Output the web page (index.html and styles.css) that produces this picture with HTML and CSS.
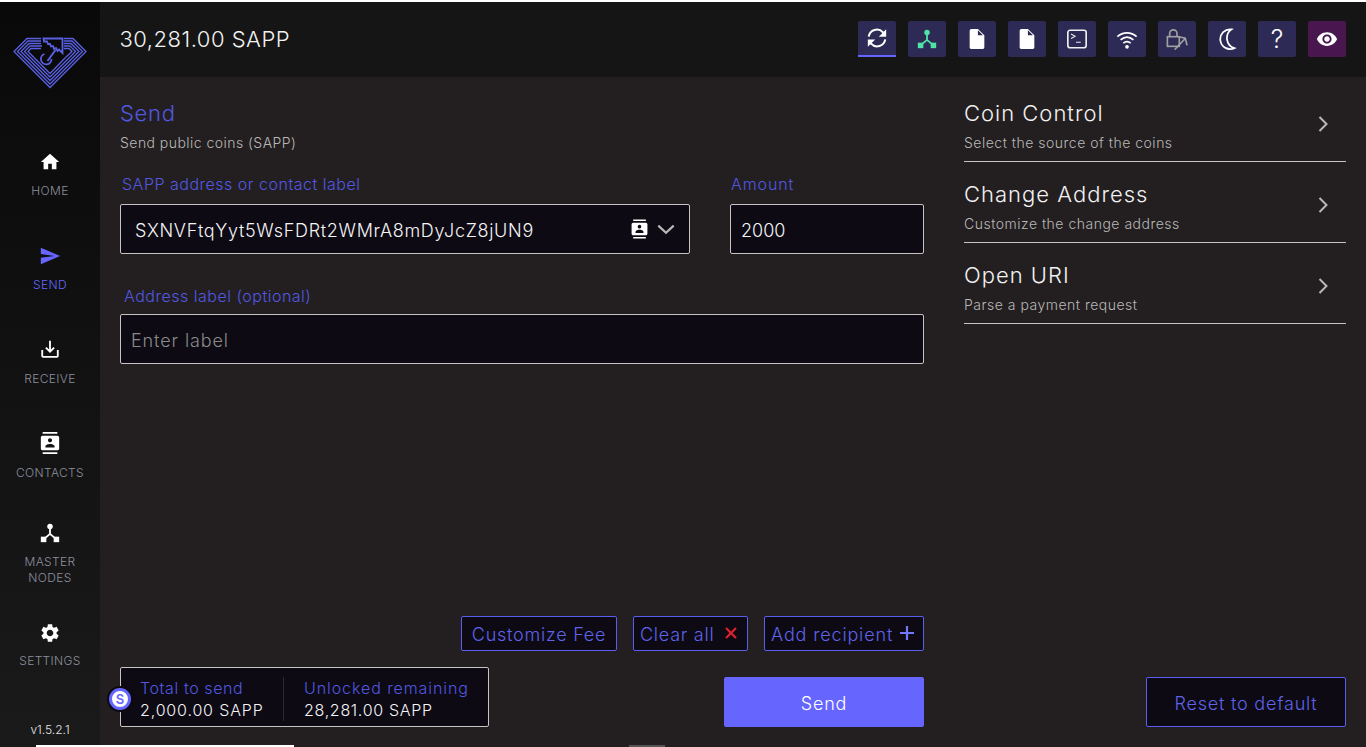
FILE: index.html
```html
<!DOCTYPE html>
<html lang="en">
<head>
<meta charset="utf-8">
<title>Send</title>
<link rel="stylesheet" href="styles.css">
</head>
<body>
<div class="app">
  <aside class="sidebar">
    <svg class="logo" viewBox="0 0 74 52" width="74" height="52" fill="none" stroke="#5a60e4" stroke-width="1.300">
      <path d="M28 1.500H14L1 14.500l36 36 36-36-13-13H51"/>
      <path d="M28 4H15L4.500 14.500 37 47 69.500 14.500 59 4H51"/>
      <path d="M28 6.500H16L8 14.500 37 43.500 66 14.500 58 6.500H51"/>
      <path d="M29 9H17L11.500 14.500 37 40 62.500 14.500 57 9H51"/>
      <path d="M28 11.500H18L15 14.500 21 20.500M52.500 20.500 59 14.500 56 11.500H51"/>
      <path d="M21 20.500 37 36.500 52.500 20.500"/>
      <path d="M30.500 1.500H49.500V16L46 12.500 44.500 14 43 11 41 12 40 9 38 9.500 37 7 35 7 34 4.500 31 4.500z" stroke-width="1.800"/>
      <path d="M42.500 13 34.500 24" stroke-width="2"/>
      <path d="M31.500 17a5.300 5.300 0 1 0 7 5" stroke-width="1.800"/>
    </svg>
    <nav class="nav">
      <a class="nav-item">
        <svg class="nav-icon" viewBox="0 -1 24 24"><path d="M10 20v-6h4v6h5v-8h3L12 3 2 12h3v8z"/></svg>
        <span class="nav-label">HOME</span>
      </a>
      <a class="nav-item nav-item-active">
        <svg class="nav-icon" viewBox="0 -1 24 24"><path d="M2.010 21 23 12 2.010 3 2 10l15 2-15 2z"/></svg>
        <span class="nav-label">SEND</span>
      </a>
      <a class="nav-item">
        <svg class="nav-icon" viewBox="0 0 24 24"><path d="M12 3v12M7.500 10.500 12 15l4.500-4.500M3.500 13v6.500c0 .6.400 1 1 1h15c.6 0 1-.4 1-1V13" fill="none" stroke="#fff" stroke-width="2"/></svg>
        <span class="nav-label">RECEIVE</span>
      </a>
      <a class="nav-item">
        <svg class="nav-icon" viewBox="0 0 24 24"><path d="M20 0H4v2h16V0zM4 24h16v-2H4v2zM20 4H4c-1.100 0-2 .9-2 2v12c0 1.100.9 2 2 2h16c1.100 0 2-.9 2-2V6c0-1.100-.9-2-2-2zm-8 2.750c1.240 0 2.250 1.010 2.250 2.250s-1.010 2.250-2.250 2.250S9.750 10.240 9.750 9 10.760 6.750 12 6.750zM17 17H7v-1.500c0-1.670 3.330-2.500 5-2.500s5 .83 5 2.500V17z"/></svg>
        <span class="nav-label">CONTACTS</span>
      </a>
      <a class="nav-item nav-item-master">
        <svg class="nav-icon" viewBox="0 0 24 24"><circle cx="12" cy="5" r="3"/><rect x="2" y="16" width="6" height="6"/><rect x="16" y="16" width="6" height="6"/><path d="M12 6v7L5 19M12 13l7 6" fill="none" stroke="#fff" stroke-width="2"/></svg>
        <span class="nav-label">MASTER<br>NODES</span>
      </a>
      <a class="nav-item nav-item-settings">
        <svg class="nav-icon" viewBox="0 0 24 24"><path d="M19.140 12.940c.04-.3.06-.61.06-.94 0-.32-.02-.64-.07-.94l2.030-1.580c.18-.14.23-.41.12-.61l-1.920-3.320c-.12-.22-.37-.29-.59-.22l-2.390.96c-.5-.38-1.030-.7-1.620-.94l-.36-2.540c-.04-.24-.24-.41-.48-.41h-3.840c-.24 0-.43.17-.47.41l-.36 2.540c-.59.24-1.130.57-1.620.94l-2.390-.96c-.22-.08-.47 0-.59.22L2.740 8.870c-.12.21-.08.47.12.61l2.030 1.580c-.05.3-.09.63-.09.94s.02.64.07.94l-2.030 1.580c-.18.14-.23.41-.12.61l1.920 3.320c.12.22.37.29.59.22l2.390-.96c.5.38 1.030.7 1.620.94l.36 2.540c.05.24.24.41.48.41h3.840c.24 0 .44-.17.47-.41l.36-2.540c.59-.24 1.130-.56 1.620-.94l2.390.96c.22.08.47 0 .59-.22l1.920-3.320c.12-.22.07-.47-.12-.61l-2.010-1.580zM12 15.600c-1.980 0-3.600-1.620-3.600-3.600s1.620-3.600 3.600-3.600 3.600 1.620 3.600 3.600-1.620 3.600-3.600 3.600z"/></svg>
        <span class="nav-label">SETTINGS</span>
      </a>
    </nav>
    <div class="version">v1.5.2.1</div>
  </aside>

  <div class="content">
    <header class="topbar">
      <div class="balance">30,281.00 SAPP</div>
      <div class="tools">
        <button class="tool tool-active"><svg viewBox="0 0 24 24" class="tool-icon" fill="none" stroke="#fff" stroke-width="2.200"><path d="M3 10.500A9 9 0 0 1 18.500 5.800L20.500 7.800M21 13.500A9 9 0 0 1 5.500 18.200L3.500 16.200"/><path d="M22 2.500v8h-8zM2 21.500v-8h8z" fill="#fff" stroke="none"/></svg></button>
        <button class="tool"><svg viewBox="0 0 24 24" class="tool-icon tool-green"><circle cx="12" cy="5" r="3"/><rect x="2" y="16" width="6" height="6"/><rect x="16" y="16" width="6" height="6"/><path d="M12 6v7L5 19M12 13l7 6" fill="none" stroke="#4fe3a5" stroke-width="2"/></svg></button>
        <button class="tool"><svg viewBox="0 0 24 24" class="tool-icon tool-fill"><path d="M6 1c-1.100 0-1.990.9-1.990 2L4 21c0 1.100.89 2 1.990 2H18c1.100 0 2-.9 2-2V8l-7-7H6zm7 7V2.500L18.500 8H13z"/></svg></button>
        <button class="tool"><svg viewBox="0 0 24 24" class="tool-icon tool-fill"><path d="M6 1c-1.100 0-1.990.9-1.990 2L4 21c0 1.100.89 2 1.990 2H18c1.100 0 2-.9 2-2V8l-7-7H6zm7 7V2.500L18.500 8H13z"/></svg></button>
        <button class="tool"><svg viewBox="0 0 24 24" class="tool-icon" fill="none" stroke="#f0f0f0"><rect x="2" y="2.500" width="20" height="19" rx="2.500" stroke-width="1.800"/><path d="M5.500 6.500 10 9 5.500 11.500M11 15.500H16" stroke-width="1.100"/></svg></button>
        <button class="tool"><svg viewBox="0 0 24 24" class="tool-icon" fill="none" stroke="#fff" stroke-width="1.900"><path d="M1.500 9.500c6-5.500 15-5.500 21 0M5 13c4.500-4 9.500-4 14 0M8 16.500c2.500-2 5.500-2 8 0"/><circle cx="12" cy="20.500" r="2" fill="#fff" stroke="none"/></svg></button>
        <button class="tool"><svg viewBox="0 0 24 24" class="tool-icon" fill="none" stroke="#a0a0a0" stroke-width="1.800"><rect x="1.500" y="9.500" width="13" height="10.500"/><path d="M4 9.500V6a4 4 0 0 1 8 0v3.500M9.500 23.500 21 11.500M14 9.500 21 11l2 8"/></svg></button>
        <button class="tool"><svg viewBox="0 0 24 24" class="tool-icon" fill="none" stroke="#fff" stroke-width="1.900"><path d="M17 1.500a10.800 10.800 0 1 0 3 20.500 11.500 11.500 0 0 1-3-20.500z"/></svg></button>
        <button class="tool tool-help">?</button>
        <button class="tool tool-eye"><svg viewBox="0 0 24 24" class="tool-icon tool-fill"><path d="M12 4.500C7 4.500 2.730 7.610 1 12c1.730 4.390 6 7.500 11 7.500s9.270-3.110 11-7.500c-1.730-4.390-6-7.500-11-7.500zM12 17c-2.760 0-5-2.240-5-5s2.240-5 5-5 5 2.240 5 5-2.240 5-5 5zm0-8c-1.660 0-3 1.340-3 3s1.340 3 3 3 3-1.340 3-3-1.340-3-3-3z"/></svg></button>
      </div>
    </header>

    <main class="main">
      <section class="form">
        <h1 class="page-title">Send</h1>
        <p class="page-sub">Send public coins (SAPP)</p>
        <div class="row">
          <div class="field field-address">
            <label class="label label-address">SAPP address or contact label</label>
            <div class="input input-address">
              <span class="input-value input-value-address">SXNVFtqYyt5WsFDRt2WMrA8mDyJcZ8jUN9</span>
              <svg class="contact-icon" viewBox="0 0 24 24"><path d="M20 0H4v2h16V0zM4 24h16v-2H4v2zM20 4H4c-1.100 0-2 .9-2 2v12c0 1.100.9 2 2 2h16c1.100 0 2-.9 2-2V6c0-1.100-.9-2-2-2zm-8 2.750c1.240 0 2.250 1.010 2.250 2.250s-1.010 2.250-2.250 2.250S9.750 10.240 9.750 9 10.760 6.750 12 6.750zM17 17H7v-1.500c0-1.670 3.330-2.500 5-2.500s5 .83 5 2.500V17z"/></svg>
              <svg class="chevron-down" viewBox="0 0 16 10" fill="none" stroke="#b8b8b8" stroke-width="2"><path d="M1 1.500 8 8l7-6.500"/></svg>
            </div>
          </div>
          <div class="field field-amount">
            <label class="label label-amount">Amount</label>
            <div class="input input-amount"><span class="input-value">2000</span></div>
          </div>
        </div>
        <div class="field field-label">
          <label class="label label-optional">Address label (optional)</label>
          <div class="input input-plain"><span class="placeholder">Enter label</span></div>
        </div>
        <div class="actions">
          <button class="btn-outline btn-fee">Customize Fee</button>
          <button class="btn-outline btn-icon btn-clear">Clear all <svg class="btn-glyph" viewBox="0 0 14 14" fill="none" stroke="#e0202c" stroke-width="2.200"><path d="M2 2l10 10M12 2 2 12"/></svg></button>
          <button class="btn-outline btn-icon btn-add">Add recipient <svg class="btn-glyph" viewBox="0 0 14 14" fill="none" stroke="#7476ff" stroke-width="2.200"><path d="M7 0v14M0 7h14"/></svg></button>
        </div>
        <div class="footer-row">
          <div class="totals">
            <span class="coin-badge">S</span>
            <div class="total total-first">
              <div class="total-label">Total to send</div>
              <div class="total-value">2,000.00 SAPP</div>
            </div>
            <div class="total total-second">
              <div class="total-label">Unlocked remaining</div>
              <div class="total-value">28,281.00 SAPP</div>
            </div>
          </div>
          <button class="btn-send">Send</button>
        </div>
      </section>

      <section class="side">
        <div class="accordion">
          <div class="acc-text"><div class="acc-title">Coin Control</div><div class="acc-sub">Select the source of the coins</div></div>
          <svg class="chevron" viewBox="0 0 10 16" fill="none" stroke="#b8b8b8" stroke-width="2"><path d="M1.500 1 8.500 8l-7 7"/></svg>
        </div>
        <div class="accordion">
          <div class="acc-text"><div class="acc-title">Change Address</div><div class="acc-sub">Customize the change address</div></div>
          <svg class="chevron" viewBox="0 0 10 16" fill="none" stroke="#b8b8b8" stroke-width="2"><path d="M1.500 1 8.500 8l-7 7"/></svg>
        </div>
        <div class="accordion">
          <div class="acc-text"><div class="acc-title">Open URI</div><div class="acc-sub">Parse a payment request</div></div>
          <svg class="chevron" viewBox="0 0 10 16" fill="none" stroke="#b8b8b8" stroke-width="2"><path d="M1.500 1 8.500 8l-7 7"/></svg>
        </div>
        <button class="btn-reset">Reset to default</button>
      </section>
    </main>
  </div>
  <div class="strip strip-white"></div>
  <div class="strip strip-gray"></div>
</div>
</body>
</html>
```

FILE: styles.css
```css
* { box-sizing: border-box; }
html, body { margin: 0; height: 100%; overflow: hidden; background: #fff; }
body { font-family: Inter, "Liberation Sans", sans-serif; font-weight: 300; }
button { font-family: inherit; font-weight: inherit; cursor: pointer; }

.app { position: relative; display: flex; height: 747px; padding-top: 2px; background: #fff; overflow: hidden; }

.sidebar { width: 100px; flex: none; display: flex; flex-direction: column; align-items: center; padding-top: 35px; background: linear-gradient(#090909, #1a1a1a); }
.logo { flex: none; }
.nav { display: grid; grid-template-rows: 94px 94px 94px 90px 100px 94px; margin-top: 61px; width: 100%; }
.nav-item { display: flex; flex-direction: column; align-items: center; }
.nav-icon { width: 22px; height: 22px; fill: #fff; margin-bottom: 11px; flex: none; }
.nav-item-master .nav-icon { margin-bottom: 10px; }
.nav-item-settings .nav-icon { margin-bottom: 9px; }
.nav-label { font-size: 12px; line-height: 16px; text-align: center; color: #8c8f9e; letter-spacing: .35px; }
.nav-item-active .nav-icon { fill: #6666ff; }
.nav-item-active .nav-label { color: #6666ff; }
.version { margin-top: 6px; font-size: 12px; line-height: 16px; color: #e8e8e8; }

.content { flex: 1; min-width: 0; display: flex; flex-direction: column; background: #231f20; }
.topbar { height: 75px; flex: none; display: flex; align-items: center; justify-content: space-between; padding: 0 20px; background: #151515; }
.balance { font-size: 22px; color: #f2f2f2; letter-spacing: .5px; margin-top: -1px; margin-left: -.5px; }
.tools { display: flex; gap: 12px; margin-top: -1px; }
.tool { width: 38px; height: 36px; padding: 0; border: 0; border-radius: 2px; background: #2d2a55; color: #fff; display: flex; align-items: center; justify-content: center; }
.tool-active { border-bottom: 2px solid #6666ff; border-radius: 2px 2px 0 0; }
.tool-icon { width: 22px; height: 22px; }
.tool-fill { fill: #fff; }
.tool-green { fill: #4fe3a5; }
.tool-help { font-size: 25px; font-weight: 300; }
.tool-eye { background: #4a1650; }

.main { flex: 1; min-height: 0; display: flex; gap: 40px; padding: 20px 20px 20px; }
.form { width: 804px; flex: none; display: flex; flex-direction: column; }
.page-title { margin: 0; font-size: 22px; line-height: 32px; font-weight: 300; color: #5158e0; letter-spacing: .7px; }
.page-sub { margin: 4px 0 0; font-size: 14px; line-height: 20px; color: #b8b8b8; letter-spacing: .46px; }

.row { display: flex; justify-content: space-between; margin-top: 20px; }
.field { display: flex; flex-direction: column; }
.field-address { width: 570px; }
.field-amount { width: 194px; }
.field-label { margin-top: 31px; }
.label { font-size: 16px; line-height: 22px; color: #5158e0; margin-bottom: 9px; letter-spacing: .5px; }
.label-address { padding-left: 2px; }
.label-amount { padding-left: 1px; letter-spacing: .9px; }
.label-optional { padding-left: 4px; margin-bottom: 7px; }
.input { height: 50px; display: flex; align-items: center; padding-top: 2px; background: #0d0a14; border: 1px solid #c4c4c4; border-radius: 2px; }
.input-address { padding-left: 14px; padding-right: 14px; }
.input-amount { padding-left: 10px; padding-right: 10px; }
.input-plain { padding-left: 10px; padding-right: 10px; }
.input-value { font-size: 18px; color: #f4f4f4; flex: 1; }
.input-value-address { letter-spacing: .68px; }
.placeholder { font-size: 18px; color: #8a8a8a; letter-spacing: .9px; }
.contact-icon { width: 19px; height: 20px; fill: #fff; flex: none; margin-top: -2px; }
.chevron-down { width: 18px; height: 11px; flex: none; margin-left: 8px; margin-top: -2px; }

.actions { display: flex; justify-content: flex-end; gap: 16px; margin-top: auto; }
.btn-outline { height: 35px; padding: 2px 10px 0; background: #0d0a14; color: #5f63ea; border: 1px solid #5a5ef0; border-radius: 2px; font-size: 18px; letter-spacing: .75px; white-space: nowrap; display: flex; align-items: center; gap: 6px; }
.btn-fee { width: 156px; justify-content: center; padding-left: 0; padding-right: 0; }
.btn-icon { padding-left: 6px; padding-right: 9px; justify-content: space-between; }
.btn-clear { width: 115px; }
.btn-add { width: 160px; letter-spacing: .85px; }
.btn-glyph { width: 14px; height: 14px; flex: none; margin-top: -3px; }

.footer-row { display: flex; justify-content: space-between; align-items: flex-end; margin-top: 16px; }
.totals { position: relative; width: 369px; height: 60px; display: flex; align-items: center; padding: 3px 0 0 19px; background: #0d0a14; border: 1px solid #c4c4c4; border-radius: 2px; }
.coin-badge { position: absolute; left: -12px; top: 20px; width: 22px; height: 22px; border-radius: 50%; background: #fff; border: 3px solid #6666ff; box-shadow: 0 0 0 2px #0d0a14; color: #6666ff; font-size: 13px; font-weight: 600; display: flex; align-items: center; justify-content: center; }
.total { display: flex; flex-direction: column; }
.total-first { width: 144px; margin-right: 20px; border-right: 1px solid #2a2a30; }
.total-label { font-size: 16px; line-height: 22px; color: #5158e0; }
.total-value { font-size: 16px; line-height: 22px; color: #f4f4f4; }
.total-first .total-label { letter-spacing: .6px; }
.total-first .total-value { letter-spacing: .85px; }
.total-second .total-label { letter-spacing: .92px; }
.total-second .total-value { letter-spacing: .7px; }
.btn-send { width: 200px; height: 50px; padding-top: 4px; border: 0; border-radius: 2px; background: #6666ff; color: #fff; font-size: 18px; letter-spacing: .8px; }

.side { flex: 1; min-width: 0; display: flex; flex-direction: column; }
.accordion { height: 65px; flex: none; display: flex; align-items: flex-start; justify-content: space-between; padding-right: 18px; border-bottom: 1px solid #c4c4c4; }
.accordion + .accordion { height: 81px; padding-top: 16px; }
.acc-title { font-size: 22px; line-height: 32px; color: #f2f2f2; letter-spacing: 1px; }
.acc-sub { font-size: 14px; line-height: 20px; color: #b8b8b8; margin-top: 4px; letter-spacing: .5px; }
.chevron { width: 10px; height: 16px; flex: none; margin-top: 19px; }
.btn-reset { width: 200px; height: 50px; padding-top: 4px; margin-top: auto; align-self: flex-end; background: #0d0a14; color: #5f63ea; border: 1px solid #5a5ef0; border-radius: 2px; font-size: 18px; letter-spacing: .8px; }

.strip { position: absolute; bottom: 0; height: 2px; }
.strip-white { left: 36px; width: 258px; background: #fff; }
.strip-gray { left: 629px; width: 36px; background: #555; }
```
